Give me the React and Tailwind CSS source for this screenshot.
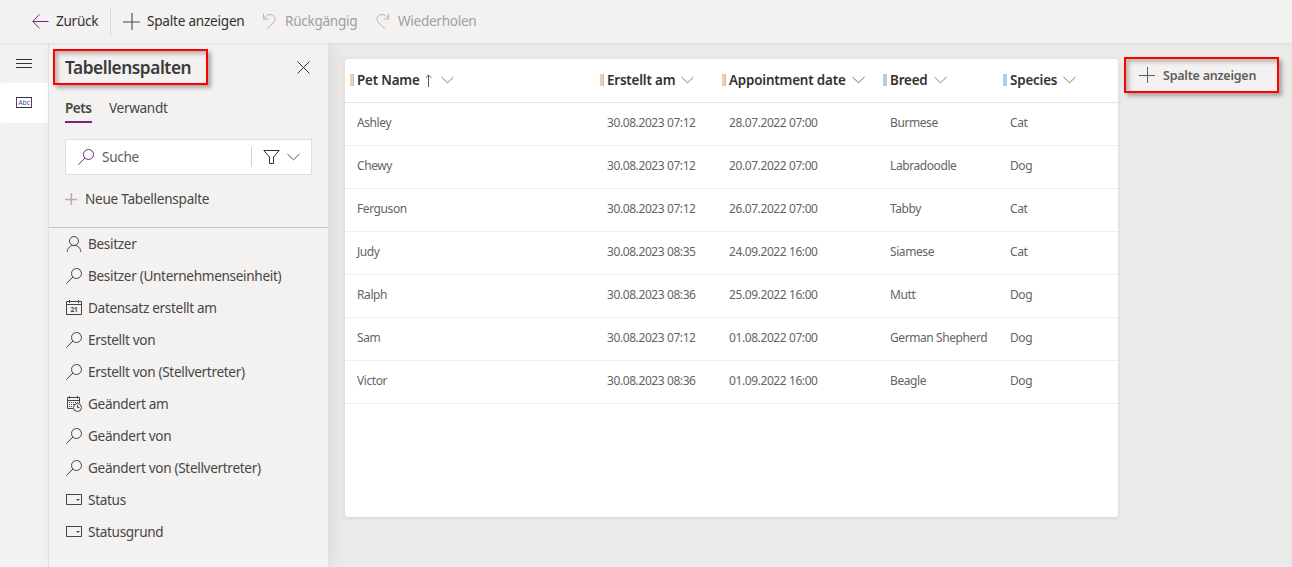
const fields = [
  { icon: 'person', label: 'Besitzer' },
  { icon: 'search', label: 'Besitzer (Unternehmenseinheit)' },
  { icon: 'calendar', label: 'Datensatz erstellt am' },
  { icon: 'search', label: 'Erstellt von' },
  { icon: 'search', label: 'Erstellt von (Stellvertreter)' },
  { icon: 'calendarClock', label: 'Geändert am' },
  { icon: 'search', label: 'Geändert von' },
  { icon: 'search', label: 'Geändert von (Stellvertreter)' },
  { icon: 'choice', label: 'Status' },
  { icon: 'choice', label: 'Statusgrund' },
];

const columns = [
  { label: 'Pet Name', sorted: true, bar: 'bg-[#f5cda6]', edge: 'bg-[#b9c3d2]', chevron: 'text-[#967c58]' },
  { label: 'Erstellt am', bar: 'bg-[#f5cda6]', edge: 'bg-[#b9c3d2]', chevron: 'text-[#5f83b4]' },
  { label: 'Appointment date', bar: 'bg-[#f5cda6]', edge: 'bg-[#c9b5b0]', chevron: 'text-[#65707c]' },
  { label: 'Breed', bar: 'bg-[#a6d0fa]', edge: 'bg-[#d3c1ae]', chevron: 'text-[#967c58]' },
  { label: 'Species', bar: 'bg-[#a6d0fa]', edge: 'bg-[#d3c1ae]', chevron: 'text-[#8c7860]' },
];

const rows = [
  ['Ashley', '30.08.2023 07:12', '28.07.2022 07:00', 'Burmese', 'Cat'],
  ['Chewy', '30.08.2023 07:12', '20.07.2022 07:00', 'Labradoodle', 'Dog'],
  ['Ferguson', '30.08.2023 07:12', '26.07.2022 07:00', 'Tabby', 'Cat'],
  ['Judy', '30.08.2023 08:35', '24.09.2022 16:00', 'Siamese', 'Cat'],
  ['Ralph', '30.08.2023 08:36', '25.09.2022 16:00', 'Mutt', 'Dog'],
  ['Sam', '30.08.2023 07:12', '01.08.2022 07:00', 'German Shepherd', 'Dog'],
  ['Victor', '30.08.2023 08:36', '01.09.2022 16:00', 'Beagle', 'Dog'],
];

const grid = 'grid grid-cols-[250px_122px_161px_120px_1fr] pl-3';

function Plus({ size = 16, weight = 1, className }) {
  return (
    <svg width={size} height={size} viewBox="0 0 16 16" fill="none" stroke="currentColor" strokeWidth={weight} className={className}>
      <path d="M0 8.5h16M8.5 0v16" />
    </svg>
  );
}

function Chevron({ className }) {
  return (
    <svg width="13" height="8" viewBox="0 0 13 8" fill="none" stroke="currentColor" className={className}>
      <path d="M.5 1l6 5.8 6-5.8" />
    </svg>
  );
}

function Search({ className }) {
  return (
    <svg width="16" height="16" viewBox="0 0 16 16" fill="none" stroke="currentColor" className={className}>
      <circle cx="10.5" cy="5.5" r="5" />
      <path d="M6.9 9.1.3 15.7" />
    </svg>
  );
}

function FieldIcon({ name }) {
  if (name === 'search') return <Search />;
  return (
    <svg width="16" height="16" viewBox="0 0 16 16" fill="none" stroke="currentColor">
      {name === 'person' && (
        <>
          <circle cx="8" cy="5" r="4.5" />
          <path d="M1.2 16c0-4 3-6.6 6.8-6.6s6.8 2.6 6.8 6.6" />
        </>
      )}
      {name === 'calendar' && (
        <>
          <path d="M.5 1.5h15v13H.5zM.5 4.5h15M3.5 0v3M12.5 0v3" />
          <text x="8" y="12" textAnchor="middle" fontSize="6.5" fontWeight="700" fill="currentColor" stroke="none">21</text>
        </>
      )}
      {name === 'calendarClock' && (
        <>
          <path d="M7 12.5H1.5v-11h12V7M1.5 4.5h12M3.5 0v2.5M11.5 0v2.5" />
          <path d="M3 6.5h9M3 8.5h5M3 10.5h4" strokeDasharray="1 1" />
          <circle cx="11.5" cy="11.5" r="4" />
          <path d="M11.5 9v2.5h2" />
        </>
      )}
      {name === 'choice' && (
        <>
          <path d="M.5 2.5h15v10H.5z" />
          <path d="M10 7h4l-2 2z" fill="currentColor" stroke="none" />
        </>
      )}
    </svg>
  );
}

function UndoArrow({ className }) {
  return (
    <svg width="14" height="17" viewBox="0 0 14 17" fill="none" stroke="currentColor" className={className}>
      <path d="M1.5 1v5h5M1.7 5.8C3.5 3 5.5 1.5 8 1.5c3 0 5 2 5 4.7 0 1.3-.5 2.4-1.5 3.4L5 16" />
    </svg>
  );
}

function CommandBar() {
  return (
    <header className="relative z-10 flex h-[43px] shrink-0 items-center bg-[#f3f2f1] pl-8 text-[13.6px] tracking-[-0.3px] text-[#323130] shadow-[0_1px_3px_rgba(0,0,0,0.07)]">
      <svg width="17" height="16" viewBox="0 0 17 16" fill="none" stroke="#742774" className="-mt-0.5">
        <path d="M16.5 8.5H1M7.5 1.5.8 8.5l6.7 6.7" />
      </svg>
      <span className="ml-[7px] w-[54px]">Zurück</span>
      <div className="h-7 w-px bg-[#dddbd9]" />
      <Plus size={17} className="ml-3 text-[#484644]" />
      <span className="ml-[7px] w-[115px] tracking-[-0.24px]">Spalte anzeigen</span>
      <UndoArrow className="text-[#bab8b6]" />
      <span className="ml-[9px] w-[91px] text-[#a19f9d]">Rückgängig</span>
      <UndoArrow className="-scale-x-100 text-[#bab8b6]" />
      <span className="ml-2 text-[#a19f9d]">Wiederholen</span>
    </header>
  );
}

function Rail() {
  return (
    <nav className="w-12 shrink-0 text-[#323130]">
      <div className="flex h-10 items-center justify-center">
        <svg width="16" height="11" viewBox="0 0 16 11" stroke="currentColor">
          <path d="M0 1.5h16M0 5.5h16M0 9.5h16" />
        </svg>
      </div>
      <div className="flex h-10 items-center justify-center rounded-l-sm bg-white pb-0.5">
        <div className="flex h-[11px] w-4 items-center justify-center border border-t-[#323130] border-r-[#742774] border-b-[#323130] border-l-[#742774] text-[7px] leading-none tracking-[-0.02em] text-[#3b5ba5]">Abc</div>
      </div>
    </nav>
  );
}

function FieldPanel() {
  return (
    <aside className="z-[5] flex w-[281px] shrink-0 flex-col border-x border-[#e1dfdd] bg-[#f3f2f1] text-[13.6px] tracking-[-0.33px] text-[#484644] shadow-[4px_0_16px_rgba(0,0,0,0.06)]">
      <div className="flex h-[48px] items-start justify-between pt-[6px] pr-[18px] pl-1">
        <h2 className="flex h-9 w-[155px] items-center border-2 border-[#fe0000] pt-0.5 pl-2.5 text-[17.3px] font-semibold tracking-[-0.45px] text-[#3b3a39] shadow-[3px_3px_4px_rgba(0,0,0,0.3),inset_3px_3px_4px_rgba(0,0,0,0.25)]">
          Tabellenspalten
        </h2>
        <svg width="13" height="13" viewBox="0 0 13 13" fill="none" stroke="currentColor" className="mt-3 text-[#323130]">
          <path d="M.5.5l12 12M12.5.5l-12 12" />
        </svg>
      </div>
      <div className="flex gap-[17px] pl-4">
        <span className="h-8 w-[27px] border-b-2 border-[#742774] pt-[7px] font-semibold tracking-[-0.5px]">Pets</span>
        <span className="pt-[7px]">Verwandt</span>
      </div>
      <div className="mt-4 ml-4 flex h-9 w-[247px] items-center border border-[#e1dfdd] bg-white pl-3 text-[#605e5c]">
        <Search className="text-[#742774]" />
        <span className="ml-2 flex-1">Suche</span>
        <div className="h-5 w-px bg-[#d2d0ce]" />
        <svg width="17" height="16" viewBox="0 0 17 16" fill="none" stroke="#323130" className="ml-[11px]">
          <path d="M.8 1.5h15.4L10.5 8v6.5h-4V8z" />
        </svg>
        <Chevron className="mr-[11px] ml-[7px] text-[#604a70]" />
      </div>
      <div className="flex h-[53px] items-center border-b border-[#c8c6c4] pb-1 pl-4">
        <Plus size={12} weight={2} className="text-[#c49fc4]" />
        <span className="ml-2 tracking-[-0.27px]">Neue Tabellenspalte</span>
      </div>
      <ul>
        {fields.map((f) => (
          <li key={f.label} className="flex h-8 items-center gap-1.5 pl-[17px]">
            <FieldIcon name={f.icon} />
            <span>{f.label}</span>
          </li>
        ))}
      </ul>
    </aside>
  );
}

function ColumnHeader({ column }) {
  return (
    <div className="-ml-[7px] flex items-center whitespace-nowrap">
      <span className={`h-3 w-[3px] ${column.bar}`} />
      <span className={`mr-[3px] h-3 w-px ${column.edge}`} />
      <span>{column.label}</span>
      {column.sorted && (
        <svg width="7" height="13" viewBox="0 0 7 13" fill="none" stroke="currentColor" className="ml-[5px] text-[#605e5c]">
          <path d="M3.5 13V1M.8 3.7 3.5 1l2.7 2.7" />
        </svg>
      )}
      <Chevron className={`${column.sorted ? 'ml-[9px]' : 'ml-1.5'} ${column.chevron}`} />
    </div>
  );
}

function PreviewTable() {
  return (
    <section className="h-[458px] w-[773px] rounded bg-white shadow-[0_1px_4px_rgba(0,0,0,0.1)]">
      <div className={`${grid} h-11 items-center border-b border-[#e6e5e4] text-[13.4px] font-semibold tracking-[-0.18px] text-[#323130]`}>
        {columns.map((c) => (
          <ColumnHeader key={c.label} column={c} />
        ))}
      </div>
      {rows.map((row) => (
        <div key={row[0]} className={`${grid} h-[43px] items-center border-b border-[#f0efee] pb-[3px] text-[12px] tracking-[-0.41px] text-[#666462]`}>
          {row.map((cell, i) => (
            <span key={i} className="whitespace-nowrap">{cell}</span>
          ))}
        </div>
      ))}
    </section>
  );
}

export default function App() {
  return (
    <div className="flex h-[567px] w-[1292px] flex-col overflow-hidden bg-[#f3f2f1] font-['Noto_Sans',sans-serif]">
      <CommandBar />
      <div className="flex min-h-0 flex-1">
        <Rail />
        <FieldPanel />
        <main className="flex flex-1 items-start bg-[#ebeae9] pt-4 pl-4">
          <PreviewTable />
          <div className="-mt-0.5 h-[34px] flex-1 pl-1.5">
            <button className="flex h-9 w-[155px] items-center border-2 border-[#fe0000] bg-[#f3f2f1] pl-[13px] text-[12.5px] font-semibold tracking-[-0.22px] text-[#605e5c] shadow-[3px_3px_4px_rgba(0,0,0,0.3),inset_3px_3px_4px_rgba(0,0,0,0.25)]">
              <Plus className="text-[#605e5c]" />
              <span className="ml-2 pt-0.5">Spalte anzeigen</span>
            </button>
          </div>
        </main>
      </div>
    </div>
  );
}
